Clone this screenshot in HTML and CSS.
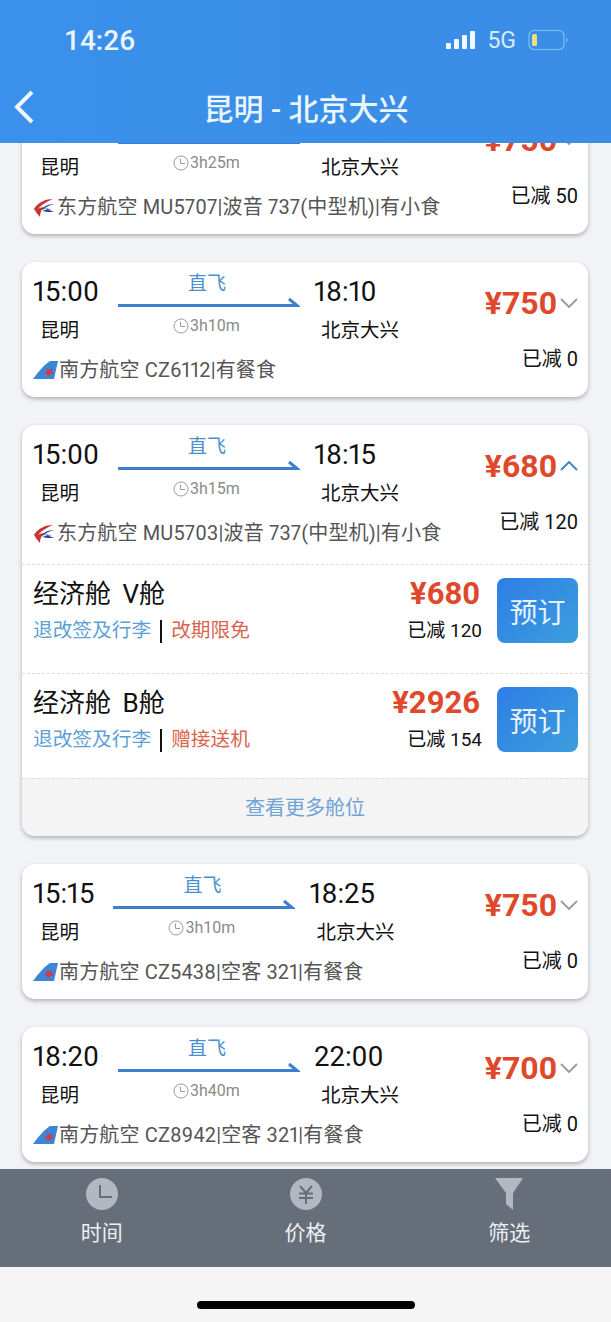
FILE: index.html
```html
<!DOCTYPE html>
<html lang="zh">
  <head>
    <meta charset="utf-8">
    <title>昆明 - 北京大兴</title>
    <link rel="stylesheet" href="styles.css">
  </head>
  <body>
    <svg class="defs" width="0" height="0">
      <symbol id="logo-east" viewBox="0 0 22 22">
        <path d="M20 3 C13 3 5 6 1 13 C3 16 5 19 7 21 C7 17 8 14 11 11 C7 12 6 12 5 13 C9 8 15 5 20 3Z" fill="#c8362f"/>
        <path d="M21 8 C16 8 11 10 8 14 C12 12 16 12 20 14 C16 13 12 14 9 15 C13 16 17 16 21 16 C17 14 13 13 11 13 C14 10 18 9 21 8Z" fill="#2b3f8f"/>
      </symbol>
      <symbol id="logo-south" viewBox="0 0 25 18">
        <path d="M25 0 L17 0 C11 4 5 11 0 18 L21 18Z" fill="#3c86d6"/>
        <path d="M14 7 l3 2 l3 -2 l-1 4 l2 2 l-4 0 l-2 3 l-1 -3 l-3 -1 l3 -2Z" fill="#cf3a52"/>
      </symbol>
      <symbol id="clock" viewBox="0 0 16 16">
        <circle cx="8" cy="8" r="7" fill="none" stroke="#9a9a9a" stroke-width="1"/>
        <path d="M7.5 3.5 V8.5 H12" fill="none" stroke="#9a9a9a" stroke-width="1"/>
      </symbol>
      <symbol id="arrow" viewBox="0 0 182 12">
        <path d="M0 9.5 H179 L171 3" fill="none" stroke="#3f7fd0" stroke-width="3"/>
      </symbol>
      <symbol id="chev-down" viewBox="0 0 18 10">
        <path d="M1 1 L9 9 L17 1" fill="none" stroke="#9a9a9a" stroke-width="1.8"/>
      </symbol>
      <symbol id="chev-up" viewBox="0 0 18 10">
        <path d="M1 9 L9 1 L17 9" fill="none" stroke="#3f86d2" stroke-width="2"/>
      </symbol>
    </svg>

    <main class="page">
      <header class="topbar">
        <div class="status">
          <span class="clock-time">14:26</span>
          <div class="status-right">
            <svg class="signal" width="30" height="20" viewBox="0 0 30 20">
              <rect x="0" y="13" width="5" height="6" rx="1"/>
              <rect x="8" y="9" width="5" height="10" rx="1"/>
              <rect x="16" y="5" width="5" height="14" rx="1"/>
              <rect x="24" y="1" width="5" height="18" rx="1"/>
            </svg>
            <span class="net">5G</span>
            <svg class="battery" width="40" height="22" viewBox="0 0 40 22">
              <rect x="1" y="1.5" width="35" height="19" rx="5" fill="none" stroke="#7cc0ee" stroke-width="1.2"/>
              <rect x="4" y="5" width="5" height="12" rx="1.5" fill="#e9e27a"/>
              <path d="M38 8.5 L40 11 L38 13.5Z" fill="#7cc0ee"/>
            </svg>
          </div>
        </div>
        <div class="nav">
          <svg class="back" width="22" height="34" viewBox="0 0 22 34">
            <path d="M18 2 L3 17 L18 32" fill="none" stroke="#eef6ff" stroke-width="4"/>
          </svg>
          <h1>昆明 - 北京大兴</h1>
        </div>
      </header>

      <section class="list">
        <!-- first card is scrolled under the top bar, its first row can't be seen -->
        <article class="card scrolled">
          <div class="flight">
            <div class="legs">
              <div class="leg-row">
                <div class="stop"><div class="time"></div><div class="city">昆明</div></div>
                <div class="route">
                  <div class="direct"></div>
                  <svg class="arrow"><use href="#arrow"/></svg>
                  <div class="duration"><svg class="clock"><use href="#clock"/></svg>3h25m</div>
                </div>
                <div class="stop"><div class="time"></div><div class="city">北京大兴</div></div>
              </div>
              <div class="airline"><svg class="logo-east"><use href="#logo-east"/></svg>东方航空 MU5707|波音 737(中型机)|有小食</div>
            </div>
            <div class="fare-side">
              <div class="price-row"><span class="price">¥750</span><svg class="chev"><use href="#chev-down"/></svg></div>
              <div class="off">已减 50</div>
            </div>
          </div>
        </article>

        <article class="card">
          <div class="flight">
            <div class="legs">
              <div class="leg-row">
                <div class="stop"><div class="time">15:00</div><div class="city">昆明</div></div>
                <div class="route">
                  <div class="direct">直飞</div>
                  <svg class="arrow"><use href="#arrow"/></svg>
                  <div class="duration"><svg class="clock"><use href="#clock"/></svg>3h10m</div>
                </div>
                <div class="stop"><div class="time">18:10</div><div class="city">北京大兴</div></div>
              </div>
              <div class="airline"><svg class="logo-south"><use href="#logo-south"/></svg>南方航空 CZ6112|有餐食</div>
            </div>
            <div class="fare-side">
              <div class="price-row"><span class="price">¥750</span><svg class="chev"><use href="#chev-down"/></svg></div>
              <div class="off">已减 0</div>
            </div>
          </div>
        </article>

        <article class="card">
          <div class="flight open">
            <div class="legs">
              <div class="leg-row">
                <div class="stop"><div class="time">15:00</div><div class="city">昆明</div></div>
                <div class="route">
                  <div class="direct">直飞</div>
                  <svg class="arrow"><use href="#arrow"/></svg>
                  <div class="duration"><svg class="clock"><use href="#clock"/></svg>3h15m</div>
                </div>
                <div class="stop"><div class="time">18:15</div><div class="city">北京大兴</div></div>
              </div>
              <div class="airline"><svg class="logo-east"><use href="#logo-east"/></svg>东方航空 MU5703|波音 737(中型机)|有小食</div>
            </div>
            <div class="fare-side">
              <div class="price-row"><span class="price">¥680</span><svg class="chev"><use href="#chev-up"/></svg></div>
              <div class="off">已减 120</div>
            </div>
          </div>

          <div class="cabin">
            <div class="cabin-info">
              <div class="cabin-name">经济舱 V舱</div>
              <div class="cabin-links"><span class="rule">退改签及行李</span><span class="sep"></span><span class="perk">改期限免</span></div>
            </div>
            <div class="cabin-fare">
              <div class="cabin-price">¥680</div>
              <div class="cabin-off">已减 120</div>
            </div>
            <button class="book">预订</button>
          </div>

          <div class="cabin last">
            <div class="cabin-info">
              <div class="cabin-name">经济舱 B舱</div>
              <div class="cabin-links"><span class="rule">退改签及行李</span><span class="sep"></span><span class="perk">赠接送机</span></div>
            </div>
            <div class="cabin-fare">
              <div class="cabin-price">¥2926</div>
              <div class="cabin-off">已减 154</div>
            </div>
            <button class="book">预订</button>
          </div>

          <div class="more">查看更多舱位</div>
        </article>

        <article class="card">
          <div class="flight">
            <div class="legs">
              <div class="leg-row">
                <div class="stop"><div class="time">15:15</div><div class="city">昆明</div></div>
                <div class="route">
                  <div class="direct">直飞</div>
                  <svg class="arrow"><use href="#arrow"/></svg>
                  <div class="duration"><svg class="clock"><use href="#clock"/></svg>3h10m</div>
                </div>
                <div class="stop"><div class="time">18:25</div><div class="city">北京大兴</div></div>
              </div>
              <div class="airline"><svg class="logo-south"><use href="#logo-south"/></svg>南方航空 CZ5438|空客 321|有餐食</div>
            </div>
            <div class="fare-side">
              <div class="price-row"><span class="price">¥750</span><svg class="chev"><use href="#chev-down"/></svg></div>
              <div class="off">已减 0</div>
            </div>
          </div>
        </article>

        <article class="card">
          <div class="flight">
            <div class="legs">
              <div class="leg-row">
                <div class="stop"><div class="time">18:20</div><div class="city">昆明</div></div>
                <div class="route">
                  <div class="direct">直飞</div>
                  <svg class="arrow"><use href="#arrow"/></svg>
                  <div class="duration"><svg class="clock"><use href="#clock"/></svg>3h40m</div>
                </div>
                <div class="stop"><div class="time">22:00</div><div class="city">北京大兴</div></div>
              </div>
              <div class="airline"><svg class="logo-south"><use href="#logo-south"/></svg>南方航空 CZ8942|空客 321|有餐食</div>
            </div>
            <div class="fare-side">
              <div class="price-row"><span class="price">¥700</span><svg class="chev"><use href="#chev-down"/></svg></div>
              <div class="off">已减 0</div>
            </div>
          </div>
        </article>
      </section>

      <nav class="toolbar">
        <div class="tool">
          <svg width="32" height="32" viewBox="0 0 32 32">
            <circle cx="16" cy="16" r="16" fill="#b3b7c2"/>
            <path d="M14 7 V19 H26" fill="none" stroke="#666e7a" stroke-width="2"/>
          </svg>
          <span>时间</span>
        </div>
        <div class="tool">
          <svg width="32" height="32" viewBox="0 0 32 32">
            <circle cx="16" cy="16" r="16" fill="#b3b7c2"/>
            <path d="M10 8 L16 15 L22 8 M9 15.5 H23 M9 20 H23 M16 15 V26" fill="none" stroke="#666e7a" stroke-width="2"/>
          </svg>
          <span>价格</span>
        </div>
        <div class="tool">
          <svg width="32" height="32" viewBox="0 0 32 32">
            <path d="M2 0 H30 L20 15 V32 L13 26 V15Z" fill="#b3b7c2"/>
          </svg>
          <span>筛选</span>
        </div>
      </nav>

      <footer class="home">
        <div class="home-bar"></div>
      </footer>
    </main>
  </body>
</html>
```

FILE: styles.css
```css
* {
  box-sizing: border-box;
}

html, body {
  margin: 0;
  padding: 0;
}

body {
  font-family: Roboto, "Noto Sans CJK SC", sans-serif;
  background-color: #f2f3f7;
  color: #111;
}

.defs {
  display: block;
  height: 0;
}

.page {
  display: flex;
  flex-direction: column;
  width: 611px;
  height: 1322px;
  overflow: hidden;
}

/* top bar */
.topbar {
  position: relative;
  z-index: 2;
  flex: none;
  height: 143px;
  padding: 0 14px;
  background: linear-gradient(90deg, #3a90ea, #3b8de6);
  color: #e9f5ff;
}

.status {
  display: flex;
  align-items: center;
  justify-content: space-between;
  height: 80px;
  padding: 0 29px 0 50px;
}

.clock-time {
  font-size: 28px;
  font-weight: 500;
}

.status-right {
  display: flex;
  align-items: center;
}

.signal {
  fill: #f2f8ff;
  margin-right: 11px;
}

.net {
  font-size: 23px;
  margin-right: 12px;
  color: #d5ebfc;
}

.nav {
  display: flex;
  align-items: center;
  height: 53px;
}

.back {
  flex: none;
}

.nav h1 {
  flex: 1;
  margin: 0 21px 0 0;
  text-align: center;
  font-size: 30px;
  font-weight: 500;
}

/* flights */
.list {
  flex: 1;
  min-height: 0;
  display: flex;
  flex-direction: column;
  gap: 28px;
  margin-top: -44px;
  padding: 0 23px 0 22px;
}

.card {
  flex: none;
  background: #fff;
  border-radius: 13px;
  box-shadow: 0 2px 4px rgba(0, 0, 0, .28);
  overflow: hidden;
}

.flight {
  display: flex;
  justify-content: space-between;
  height: 135px;
  padding: 10px 10px 0 11px;
}

.flight.open {
  height: 139px;
}

.leg-row {
  display: flex;
}

.time {
  height: 30px;
  margin-top: 5px;
  font-size: 27.5px;
  line-height: 30px;
  font-variant-numeric: proportional-nums;
}

.scrolled .time {
  width: 66px;
}

.city {
  margin: 10px 0 0 7px;
  font-size: 19.5px;
  line-height: 27px;
}

.route {
  width: 182px;
  margin: 0 14px 0 19px;
}

.direct {
  height: 23px;
  padding-right: 4px;
  text-align: center;
  font-size: 19px;
  line-height: 24px;
  color: #4a90d0;
}

.arrow {
  display: block;
  width: 182px;
  height: 12px;
  margin-top: 1px;
}

.duration {
  display: flex;
  align-items: center;
  margin: 7px 0 0 55px;
  font-size: 16px;
  line-height: 22px;
  color: #8a8a8a;
}

.clock {
  width: 16px;
  height: 16px;
  margin-right: 1px;
}

.airline {
  display: flex;
  align-items: center;
  margin-top: 12px;
  font-size: 20px;
  line-height: 28px;
  letter-spacing: .15px;
  font-variant-numeric: proportional-nums;
  color: #555;
  white-space: nowrap;
}

.logo-east {
  width: 22px;
  height: 22px;
  margin-right: 2px;
}

.logo-south {
  width: 25px;
  height: 18px;
  margin-right: 1px;
}

.fare-side {
  display: flex;
  flex-direction: column;
  align-items: flex-end;
  margin-top: 13px;
}

.price-row {
  display: flex;
  align-items: center;
  height: 36px;
}

.price {
  font-size: 32px;
  font-weight: 700;
  color: #e0482b;
}

.chev {
  width: 18px;
  height: 10px;
  margin-left: 3px;
}

.off {
  margin-top: 24px;
  font-size: 20px;
  line-height: 28px;
}

/* cabins */
.cabin {
  display: flex;
  height: 109px;
  padding: 13px 10px 0 11px;
  border-top: 1px dashed #dcdde2;
}

.cabin.last {
  height: 105px;
}

.cabin-info {
  flex: 1;
}

.cabin-name {
  font-size: 26px;
  line-height: 32px;
  word-spacing: 5px;
}

.cabin-links {
  display: flex;
  align-items: center;
  margin-top: 8px;
  font-size: 19.7px;
  line-height: 26px;
}

.rule {
  color: #5b9fd6;
}

.sep {
  width: 2px;
  height: 23px;
  margin: 0 9px;
  background: #111;
}

.perk {
  color: #d9654f;
}

.cabin-fare {
  text-align: right;
}

.cabin-price {
  margin-right: 2px;
  font-size: 31px;
  font-weight: 700;
  line-height: 32px;
  color: #e0482b;
}

.cabin-off {
  margin-top: 8px;
  font-size: 19px;
  line-height: 26px;
}

.book {
  width: 81px;
  height: 65px;
  margin-left: 15px;
  padding: 0;
  border: 0;
  border-radius: 8px;
  background: linear-gradient(135deg, #2f7de6, #3b9fdd);
  color: #e6f3ff;
  font-family: inherit;
  font-size: 28px;
}

.more {
  height: 58px;
  line-height: 58px;
  text-align: center;
  font-size: 20px;
  color: #6fa3d6;
  background: #f4f4f4;
  border-top: 1px dashed #dcdde2;
}

/* bottom */
.toolbar {
  flex: none;
  display: flex;
  height: 98px;
  padding: 9px 0 0;
  background: #666e7a;
}

.tool {
  flex: 1;
  display: flex;
  flex-direction: column;
  align-items: center;
  font-size: 21px;
  line-height: 30px;
  color: #eceef1;
}

.tool svg {
  margin-bottom: 8px;
}

.home {
  flex: none;
  height: 55px;
  padding-top: 34px;
  background: #f5f5f5;
}

.home-bar {
  width: 218px;
  height: 8px;
  margin: 0 auto;
  border-radius: 4px;
  background: #000;
}
```
